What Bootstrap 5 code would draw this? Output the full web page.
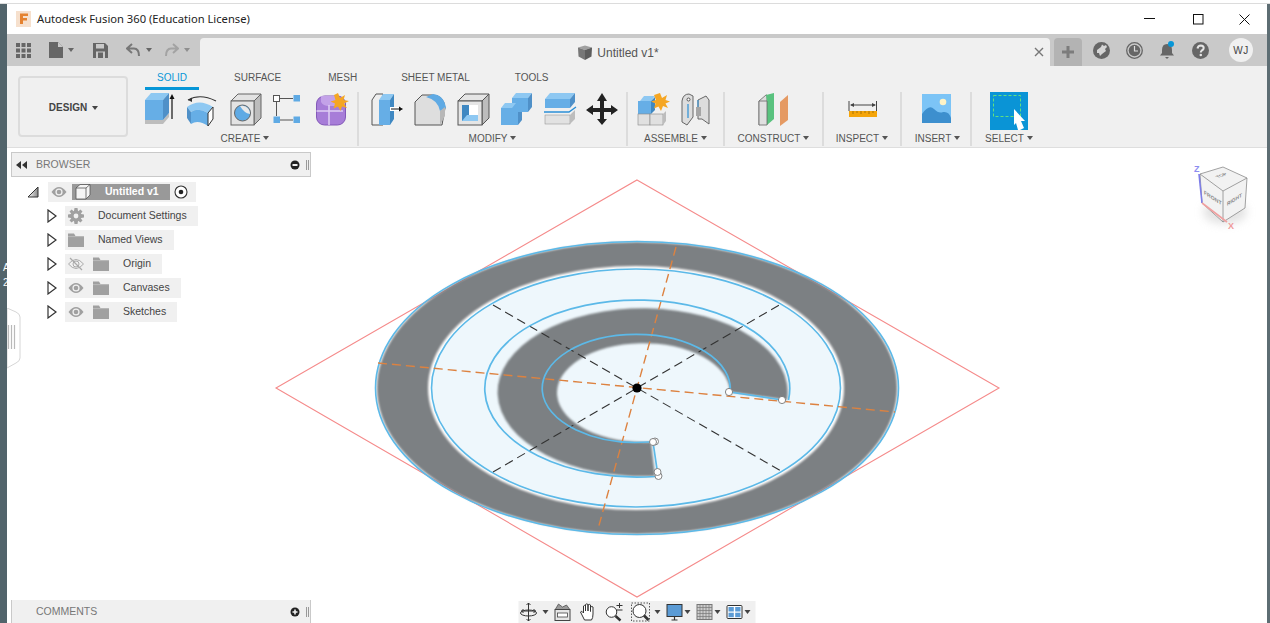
<!DOCTYPE html>
<html lang="en"><head><meta charset="utf-8"><title>Autodesk Fusion 360</title>
<link rel="stylesheet" href="https://cdn.jsdelivr.net/npm/bootstrap@5.3.0/dist/css/bootstrap.min.css">
<style>
html,body{height:623px;overflow:hidden;background:#fff}
body{font-family:"Liberation Sans",Arial,sans-serif;font-size:10px;color:#555}
svg{display:block;flex:none}
.appw{height:620px;margin-top:3px;border-top:1px solid #dcdcdc}
.sidel{width:7px;background:#52646b;color:#fff;font-size:10px;line-height:15px;padding-top:256px;padding-left:3px;overflow:hidden;flex:none}
.sider{width:3px;background:#5d6d73;flex:none}
.mainc{min-width:0}
.titleb{height:30px;background:#fff;color:#222;font-family:"Noto Sans",sans-serif;font-size:11.2px}
.tbic{padding-left:9px}
.titletx{margin-left:6px}
.winbtn{width:45px;height:30px}
.shift5{margin-right:10px}.shift1{margin-right:2px}
.tabb{height:32px;background:#c9c9c9}
.tabtools{width:193px;padding-left:9px;height:32px}
.m18{margin-left:18px}.m19{margin-left:19px}.m5{margin-left:5px}.m6{margin-left:6px}.m13{margin-left:13px}
.tabdoc{width:850px;height:28px;background:#f0f0f0;border-radius:4px 4px 0 0;color:#555;font-size:12px;position:relative;padding-right:14px}
.doctx{padding-top:1px}
.tabclose{position:absolute;right:6px;top:9px}
.plusb{width:28px;height:28px;background:#b3b3b3;border-radius:4px 4px 0 0;margin-left:4px}
.crt{display:inline-block;width:0;height:0;border-left:3.5px solid transparent;border-right:3.5px solid transparent;border-top:4px solid currentColor;flex:none}
.caretg{color:#666}.caretl{color:#8f8f8f}
.rtools{gap:16px;padding-left:11px}
.avat{width:24px;height:24px;border-radius:50%;background:#f0f0f0;font-size:10px;color:#444;letter-spacing:.5px}
.ribbon{height:82px;background:#f0f0f0;border-bottom:1px solid #dedede;padding-left:11px}
.designb{width:110px;height:61px;margin-top:10px;border:2px solid #dcdcdc;border-radius:4px;background:#f0f0f0;font-weight:700;color:#444;font-size:10px;gap:5px;padding:2px 0 0 1px}
.ribr{margin-left:5px}
.ribtabs{height:24px;padding-left:12px;gap:23px}
.rtab{padding:4px 12px 0;height:24px;color:#555;border-bottom:2px solid transparent;font-size:10px}
.rtab-on{color:#0696d7;border-bottom:3px solid #0696d7}
.pull3{margin-left:-3px}.pull2{margin-left:-2px}
.rgp{height:54px;margin-top:2px;border-right:2px solid #dcdcdc}
.rgp-create{width:226px}.rgp-modify{width:269px}.rgp-assemble{width:97px}.rgp-construct{width:99px}.rgp-inspect{width:78px}.rgp-insert{width:70px}.rgp-select{width:74px;border-right:0}
.iconr{height:36px}
.slot{width:43px;flex:none}
.inset10{padding-left:10px}.inset11{padding-left:12px}.inset9{padding-left:9px}
.inset32{padding-left:32px}.inset24{padding-left:24px}.inset19{padding-left:19px}.inset18{padding-left:18px}
.rlabel{height:18px;gap:3px;color:#555;font-size:10px;padding-top:2px}
.insertl{padding-left:3px}
.canv{background:#fff;min-height:0}
.scene{position:absolute;left:0;top:0}
.panel{position:relative;width:300px;margin-left:4px}
.phead{height:25px;margin-top:4px;background:#f0f0f0;border:1px solid #c9c9c9;color:#777;padding-left:4px;font-size:10.5px}
.plabel{margin-left:9px}
.pgrip{margin:0 0 0 auto}
.tree{margin-top:5px;color:#444;font-size:10.5px}
.trow{height:20px;margin-bottom:4px}
.twist{margin-left:36px;margin-right:8px}
.rootpad{padding-left:16px}
.tpill{height:20px;background:#f0f0f0;padding-right:11px}
.rootpill{width:148px;margin-left:9px;background:#f0f0f0;height:20px}
.rootname{width:98px;height:16px;background:#999;color:#fff;font-weight:700;margin-left:5px;font-size:10.5px}
.rootnm{margin-left:14px}
.ic16l{margin-left:3px}.fold2{margin-left:9px}
.tnm{margin-left:14px}
.grabb{position:absolute;left:0;top:160px;z-index:2}
.combar{position:relative;width:300px;height:23px;margin-left:4px;background:#f0f0f0;border-left:1px solid #c9c9c9;border-right:1px solid #c9c9c9;color:#777;padding-left:24px;font-size:10.5px}
.navb{height:22px;width:237px;background:#f0f0f0;color:#444}
.gap6{margin-left:6px}
</style></head>
<body>
<svg class="d-none" width="0" height="0">
<symbol id="eye" viewBox="0 0 16 16"><path d="M0.5 8 Q8 -2 15.5 8 Q8 18 0.5 8Z" fill="#a0a0a0"/><circle cx="8" cy="8" r="3.6" fill="#f0f0f0"/><circle cx="8" cy="8" r="2.3" fill="#a0a0a0"/></symbol>
<symbol id="eyeoff" viewBox="0 0 16 16"><path d="M0.5 8 Q8 -1 15.5 8 Q8 17 0.5 8Z" fill="none" stroke="#aaa"/><circle cx="8" cy="8" r="3" fill="none" stroke="#aaa"/><path d="M2 2 L14 14" stroke="#aaa" stroke-width="1.2"/></symbol>
<symbol id="fold" viewBox="0 0 16 16"><path d="M0 1.5 H6 L7.5 4 H16 V15 H0Z" fill="#a0a0a0"/><path d="M0 4.6 H16" stroke="#c4c4c4" stroke-width=".7"/></symbol>
<symbol id="tw" viewBox="0 0 10 14"><path d="M1 1 L9 7 L1 13Z" fill="#fff" stroke="#333" stroke-width="1.2"/></symbol>
</svg>
<div class="appw d-flex">
 <div class="sidel">A<br>2</div>
 <div class="mainc flex-grow-1 d-flex flex-column">
  <div class="titleb d-flex align-items-center">
   <div class="tbic"><svg width="15" height="16" viewBox="0 0 15 16"><rect width="15" height="16" fill="#f6e0cd"/><path d="M4 2.5 H12 V5 H7 V7 H11 V9.5 H7 V13 H4Z" fill="#e5822f"/></svg></div>
   <div class="titletx">Autodesk Fusion 360 (Education License)</div>
   <div class="ms-auto d-flex">
    <div class="winbtn d-flex align-items-center justify-content-center"><svg class="shift5" width="11" height="2"><rect y="0" width="11" height="1" fill="#111"/></svg></div>
    <div class="winbtn d-flex align-items-center justify-content-center"><svg class="shift1" width="11" height="11"><rect x=".5" y=".5" width="9.5" height="9.5" fill="none" stroke="#111"/></svg></div>
    <div class="winbtn d-flex align-items-center justify-content-center"><svg width="11" height="11"><path d="M.5 .5 L10.5 10.5 M10.5 .5 L.5 10.5" stroke="#111"/></svg></div>
   </div>
  </div>
  <div class="tabb d-flex align-items-end">
   <div class="tabtools d-flex align-items-center">
    <svg width="15" height="15" viewBox="0 0 15 15" fill="#666"><rect width="4" height="4"/><rect x="5.5" width="4" height="4"/><rect x="11" width="4" height="4"/><rect y="5.5" width="4" height="4"/><rect x="5.5" y="5.5" width="4" height="4"/><rect x="11" y="5.5" width="4" height="4"/><rect y="11" width="4" height="4"/><rect x="5.5" y="11" width="4" height="4"/><rect x="11" y="11" width="4" height="4"/></svg>
    <svg class="m18" width="14" height="16" viewBox="0 0 14 16"><path d="M0 0 H9 L14 5 V16 H0Z" fill="#666"/><path d="M9 0 V5 H14" fill="#c9c9c9"/></svg>
    <span class="crt caretg m5"></span>
    <svg class="m19" width="15" height="15" viewBox="0 0 15 15"><path d="M0 0 H12 L15 3 V15 H0Z" fill="#666"/><rect x="3" y="1" width="8" height="4.5" fill="#c9c9c9"/><rect x="3" y="8.5" width="9" height="6.5" fill="#c9c9c9"/><rect x="5" y="9.5" width="5" height="5.5" fill="#666"/></svg>
    <svg class="m18" width="14" height="14" viewBox="0 0 14 14"><path d="M6 1 L1 5.5 L6 10 M1.5 5.5 H8 Q13 5.5 13 13" fill="none" stroke="#777" stroke-width="2"/></svg>
    <span class="crt caretg m6"></span>
    <svg class="m13" width="14" height="14" viewBox="0 0 14 14"><path d="M8 1 L13 5.5 L8 10 M12.5 5.5 H6 Q1 5.5 1 13" fill="none" stroke="#a3a3a3" stroke-width="2"/></svg>
    <span class="crt caretl m5"></span>
   </div>
   <div class="tabdoc d-flex align-items-center justify-content-center gap-1">
    <svg width="16" height="15" viewBox="0 0 16 15"><path d="M1 2.5 L8 0.5 L15 2.5 L8 5Z" fill="#a0a0a0"/><path d="M1 2.5 L8 5 V15 L1.5 11.5Z" fill="#777"/><path d="M15 2.5 L8 5 V15 L14.5 11.5Z" fill="#5d5d5d"/></svg>
    <span class="doctx">Untitled v1*</span>
    <svg class="tabclose" width="10" height="10"><path d="M1 1 L9 9 M9 1 L1 9" stroke="#777" stroke-width="1.4"/></svg>
   </div>
   <div class="plusb d-flex align-items-center justify-content-center"><svg width="14" height="14"><path d="M7 1 V13 M1 7 H13" stroke="#7c7c7c" stroke-width="3"/></svg></div>
   <div class="flex-grow-1 d-flex align-items-center h-100 rtools">
    <svg width="17" height="17" viewBox="0 0 17 17"><circle cx="8.5" cy="8.5" r="8.5" fill="#666"/><path d="M4 8 L8 5 L9 2.5 L11 4 L13 3 L14 5 L12 7 L13 9 L9 12 L7 14 L6 11 L4 11Z" fill="#d5d5d5"/></svg>
    <svg width="17" height="17" viewBox="0 0 17 17"><circle cx="8.5" cy="8.5" r="7.8" fill="#c9c9c9" stroke="#666" stroke-width="1.3"/><circle cx="8.5" cy="8.5" r="5.8" fill="#666"/><path d="M8.5 4 V9 H12" fill="none" stroke="#ddd" stroke-width="1.2"/></svg>
    <svg width="17" height="19" viewBox="0 0 17 19"><path d="M8 3 Q3 3 3 9 V12 L1 14.5 H15 L13 12 V9 Q13 3 8 3Z" fill="#666"/><path d="M6 16 H10 L8 18Z" fill="#666"/><circle cx="12" cy="3" r="3" fill="#0696d7"/></svg>
    <svg width="17" height="17" viewBox="0 0 17 17"><circle cx="8.5" cy="8.5" r="8.5" fill="#666"/><path d="M5.5 6.5 Q6 3.5 8.8 3.5 Q11.7 3.6 11.7 6 Q11.7 7.5 9.8 8.5 Q8.8 9.2 8.8 10.5" fill="none" stroke="#e5e5e5" stroke-width="2"/><circle cx="8.8" cy="13" r="1.3" fill="#e5e5e5"/></svg>
    <div class="avat ms-1 d-flex align-items-center justify-content-center">WJ</div>
   </div>
  </div>
  <div class="ribbon d-flex">
   <div class="designb d-flex align-items-center justify-content-center"><span>DESIGN</span><span class="crt"></span></div>
   <div class="ribr">
    <div class="ribtabs d-flex"><div class="rtab rtab-on">SOLID</div><div class="rtab">SURFACE</div><div class="rtab">MESH</div><div class="rtab pull3">SHEET METAL</div><div class="rtab pull2">TOOLS</div></div>
    <div class="d-flex">
     <div class="rgp rgp-create">
      <div class="iconr d-flex inset10">
       <div class="slot"><svg width="36" height="36" viewBox="0 0 36 36"><path d="M2 28 H20 L26 21 V25 L20 32 H2Z" fill="#bdbdbd"/><path d="M2 8 L8 1 H26 L20 8Z" fill="#8ec8f2"/><rect x="2" y="8" width="18" height="20" fill="#66aee6"/><path d="M20 8 L26 1 V21 L20 28Z" fill="#4f90c8"/><path d="M29 27 V5" stroke="#111" stroke-width="1.2"/><path d="M26.5 7 L29 2 L31.5 7Z" fill="#111"/></svg></div>
       <div class="slot"><svg width="36" height="36" viewBox="0 0 36 36"><path d="M2 8 Q14 1 30 9" fill="none" stroke="#333" stroke-width="1.1"/><path d="M2 8 L6 5.5 L6 10Z" fill="#333"/><path d="M1 15 Q13 6 27 15 L22 21 Q12 15 5 20Z" fill="#8ec8f2"/><path d="M1 15 L5 20 V32 L1 26Z" fill="#4f90c8"/><path d="M5 20 Q12 15 22 21 V34 Q12 27 5 32Z" fill="#66aee6"/><path d="M22 21 L27 15 V27 L22 34Z" fill="#fff" stroke="#333"/></svg></div>
       <div class="slot"><svg width="36" height="36" viewBox="0 0 36 36"><path d="M2 9 L9 2 H32 L25 9Z" fill="#e3e3e3" stroke="#666"/><path d="M25 9 L32 2 V26 L25 33Z" fill="#bcbcbc" stroke="#666"/><rect x="2" y="9" width="23" height="24" fill="#e3e3e3" stroke="#666"/><circle cx="13.5" cy="21" r="8" fill="#5faae4" stroke="#666"/><path d="M11 14 A8 8 0 0 1 21 22 Q15 21 11 14Z" fill="#e9e9e9"/></svg></div>
       <div class="slot"><svg width="36" height="36" viewBox="0 0 36 36" fill="#5faae4"><rect x="1.5" y="3.5" width="6" height="6" fill="#fff" stroke="#555"/><rect x="21.5" y="3" width="6.5" height="6.5"/><rect x="1.5" y="24.5" width="6.5" height="6.5"/><rect x="21.5" y="24.5" width="6.5" height="6.5"/><path d="M8 6.5 H21 M4.5 10 V24 M8 28 H21" stroke="#555" stroke-width="1"/></svg></div>
       <div class="slot"><svg width="36" height="36" viewBox="0 0 36 36"><rect x="1.5" y="4" width="29" height="29" rx="8" fill="#a77dd8" stroke="#8359b8"/><path d="M6 4 H22 L30 10 V14 H14 Q8 14 6 10Z" fill="#c3a2e8"/><path d="M1.5 19 H28 M14 13 V33" stroke="#e0cff3" stroke-width="1.5"/><path d="M23 1 L25 6 L30 3 L28.5 8 L34 9 L29 11.5 L32 16 L27 14.5 L25.5 19 L23 14.5 L18.5 16.5 L20 11.5 L15.5 9.5 L20.5 8 L19 3Z" fill="#f5a623"/></svg></div>
      </div>
      <div class="rlabel d-flex align-items-center justify-content-center"><span>CREATE</span><span class="crt"></span></div>
     </div>
     <div class="rgp rgp-modify">
      <div class="iconr d-flex inset11">
       <div class="slot"><svg width="36" height="36" viewBox="0 0 36 36"><path d="M1 8 L5 2 H12 V33 H1Z" fill="#eee" stroke="#555"/><path d="M8 8 L12 2 H23 L19 8Z" fill="#8ec8f2"/><rect x="8" y="8" width="11" height="25" fill="#66aee6"/><path d="M19 8 L23 2 V27 L19 33Z" fill="#3f88c2"/><rect x="19" y="15" width="12" height="4" fill="#fff"/><path d="M20 17 H29" stroke="#111"/><path d="M28 14.5 L32 17 L28 19.5Z" fill="#111"/></svg></div>
       <div class="slot"><svg width="36" height="36" viewBox="0 0 36 36"><path d="M1 10 L8 3 H18 Q30 3 31 16 L28 33 H1Z" fill="#dedede" stroke="#555"/><path d="M12 5 L19 2 Q30 3 32 16 L26 19 Q24 8 12 5Z" fill="#5faae4"/><path d="M26 19 L31 15 V24 L26 33Z" fill="#b8b8b8"/></svg></div>
       <div class="slot"><svg width="36" height="36" viewBox="0 0 36 36"><path d="M1 9 L8 2 H32 L25 9Z" fill="#e5e5e5" stroke="#555"/><path d="M25 9 L32 2 V26 L25 33Z" fill="#bdbdbd" stroke="#555"/><rect x="1" y="9" width="24" height="24" fill="#e5e5e5" stroke="#555"/><rect x="5" y="13" width="16" height="16" fill="#fff"/><path d="M5 13 H12 V23 H21 V29 H5Z" fill="#3f88c2"/><path d="M5 29 L10 23 H21 V29Z" fill="#8ec8f2"/></svg></div>
       <div class="slot"><svg width="36" height="36" viewBox="0 0 36 36"><path d="M12 6 L16 1 H32 L28 6Z" fill="#8ec8f2"/><rect x="12" y="6" width="16" height="14" fill="#66aee6"/><path d="M28 6 L32 1 V15 L28 20Z" fill="#4f90c8"/><path d="M1 16 L5 11 H16 L12 16Z" fill="#8ec8f2"/><rect x="1" y="16" width="17" height="17" fill="#66aee6"/><path d="M18 20 H22 V28 L18 33Z" fill="#4f90c8"/></svg></div>
       <div class="slot"><svg width="36" height="36" viewBox="0 0 36 36"><path d="M2 7 L7 1 H32 L27 7Z" fill="#8ec8f2"/><rect x="2" y="7" width="25" height="9" fill="#66aee6"/><path d="M27 7 L32 1 V10 L27 16Z" fill="#4f90c8"/><path d="M1 20 L26 20 L33 15" fill="none" stroke="#2b8fd6" stroke-width="1.4"/><rect x="2" y="23" width="25" height="9" fill="#e2e2e2" stroke="#888" stroke-width=".5"/><path d="M27 23 L32 18 V27 L27 32Z" fill="#bdbdbd"/></svg></div>
       <div class="slot"><svg width="36" height="36" viewBox="0 0 36 36" fill="#222"><path d="M16 1 L21 9 H18 V16 H25 V13 L32 18 L25 23 V20 H18 V27 H21 L16 33 L11 27 H14 V20 H7 V23 L0 18 L7 13 V16 H14 V9 H11Z"/></svg></div>
      </div>
      <div class="rlabel d-flex align-items-center justify-content-center"><span>MODIFY</span><span class="crt"></span></div>
     </div>
     <div class="rgp rgp-assemble">
      <div class="iconr d-flex inset9">
       <div class="slot"><svg width="36" height="36" viewBox="0 0 36 36"><path d="M3 9 L7 4 H18 L14 9Z" fill="#8ec8f2"/><rect x="1" y="9" width="13" height="13" fill="#66aee6"/><path d="M14 9 L18 5 V18 L14 22Z" fill="#3f88c2"/><rect x="1" y="22" width="12" height="11" fill="#e0e0e0" stroke="#888" stroke-width=".6"/><rect x="13" y="22" width="13" height="11" fill="#e0e0e0" stroke="#888" stroke-width=".6"/><path d="M26 22 L29 19 V29 L26 33Z" fill="#bdbdbd"/><path d="M23 1 L25 6 L30 3 L28.5 8 L33 9.5 L28.5 11.5 L31 16 L26 14 L24 19 L21.5 14.5 L17 16.5 L18.5 11.5 L14 9.5 L19 8 L17 3Z" fill="#f5a623"/></svg></div>
       <div class="slot"><svg width="36" height="36" viewBox="0 0 36 36"><path d="M2 9 Q3 2 9 2 L13 4 V25 L7 33 L2 30Z" fill="#ddd" stroke="#666"/><path d="M18 8 L26 4 L29 8 V32 L22 27 H18Z" fill="#ddd" stroke="#666"/><rect x="7" y="6" width="3" height="3" rx="1.5" fill="#fff" stroke="#555"/><path d="M8 12 V26" stroke="#2b8fd6" stroke-width="1.2"/><path d="M18 8 V15" stroke="#2b8fd6"/><rect x="16" y="15" width="5" height="9" fill="#a5a5a5"/></svg></div>
      </div>
      <div class="rlabel d-flex align-items-center justify-content-center"><span>ASSEMBLE</span><span class="crt"></span></div>
     </div>
     <div class="rgp rgp-construct">
      <div class="iconr d-flex inset32">
       <svg width="36" height="36" viewBox="0 0 36 36"><path d="M2 9 L9 3 H10 V28 L2 33Z" fill="#ddd" stroke="#666" stroke-width=".8"/><path d="M9 3 L17 1 V27 L10 33 V9Z" fill="#59c27e"/><path d="M2 9 H10 V33 H2Z" fill="#e0e0e0" stroke="#666" stroke-width=".8"/><path d="M23 10 L31 3 V28 L23 34Z" fill="#e59a63"/></svg>
      </div>
      <div class="rlabel d-flex align-items-center justify-content-center"><span>CONSTRUCT</span><span class="crt"></span></div>
     </div>
     <div class="rgp rgp-inspect">
      <div class="iconr d-flex inset24">
       <svg width="32" height="36" viewBox="0 0 32 36"><path d="M1 9 V19 M28.5 9 V19" stroke="#444"/><path d="M3 13 H27" stroke="#444"/><path d="M6 11 L2 13 L6 15Z M24 11 L28 13 L24 15Z" fill="#444"/><rect x="1" y="19" width="28" height="6" fill="#f5a50a"/><path d="M5 19 V22 M9 19 V21 M13 19 V22 M17 19 V21 M21 19 V22 M25 19 V21" stroke="#8a5f00" stroke-width=".7"/></svg>
      </div>
      <div class="rlabel d-flex align-items-center justify-content-center"><span>INSPECT</span><span class="crt"></span></div>
     </div>
     <div class="rgp rgp-insert">
      <div class="iconr d-flex inset19">
       <svg width="32" height="36" viewBox="0 0 32 36"><rect x="1" y="2" width="29" height="29" fill="#7cc4f6"/><circle cx="22" cy="10" r="3.3" fill="#fdf3c7"/><path d="M1 31 V22 Q8 12 13 17 Q18 22 22 20 Q28 19 30 26 V31Z" fill="#3d8fce"/></svg>
      </div>
      <div class="rlabel insertl d-flex align-items-center justify-content-center"><span>INSERT</span><span class="crt"></span></div>
     </div>
     <div class="rgp rgp-select">
      <div class="iconr d-flex inset18">
       <svg width="38" height="38" viewBox="0 0 38 38"><rect width="38" height="38" fill="#0a94d6"/><rect x="3.5" y="3.5" width="27" height="21" fill="none" stroke="#62e07e" stroke-dasharray="3 2"/><path d="M24 17 L35 29 H31 L34 36 L30 38 H28 L26 31 L24 33Z" fill="#fff"/></svg>
      </div>
      <div class="rlabel d-flex align-items-center justify-content-center"><span>SELECT</span><span class="crt"></span></div>
     </div>
    </div>
   </div>
  </div>
  <div class="canv flex-grow-1 position-relative d-flex flex-column">
   <svg class="scene" width="1260" height="475" viewBox="7 148 1260 475">
    <defs><filter id="soft" x="-5%" y="-5%" width="110%" height="110%"><feGaussianBlur stdDeviation="1"/></filter><filter id="soft3" x="-40%" y="-40%" width="180%" height="180%"><feGaussianBlur stdDeviation="4"/></filter></defs>
    <path d="M637 180 L999 388 L637 597 L276 388Z" fill="none" stroke="#f58a8a" stroke-width="1.1"/>
    <ellipse cx="637" cy="388" rx="260" ry="146" fill="#7c8083" filter="url(#soft)"/>
    <ellipse cx="636" cy="388" rx="208" ry="122" fill="#fff" filter="url(#soft)"/>
    <ellipse cx="636" cy="388" rx="204.5" ry="119" fill="#eef7fc"/>
    <ellipse cx="637" cy="388" rx="261.5" ry="146.5" fill="none" stroke="#5cb9e8" stroke-width="1.6"/>
    <ellipse cx="636" cy="388" rx="204.5" ry="119" fill="none" stroke="#5cb9e8" stroke-width="1.6"/>
    <path d="M787 400 A145 84 0 1 0 655 476 L651 442 A86.5 49.5 0 1 1 730 392Z" fill="#7c8083" filter="url(#soft)"/>
    <path d="M378 363 L895 412 M676 247 L598 529" stroke="#dd8240" stroke-width="1.4" stroke-dasharray="9 5" fill="none"/>
    <path d="M493 305 L781 471 M493 472 L781 304" stroke="#333" stroke-width="1.1" stroke-dasharray="9 5" fill="none"/>
    <path d="M788.5 400 A152.5 88.5 0 1 0 655 476.5 L658 476 L653 442 L648 442 A94 54 0 1 1 730 392 L782 400" fill="none" stroke="#5cb9e8" stroke-width="1.7"/>
    <g fill="#fff" stroke="#777" stroke-width=".9"><circle cx="655" cy="441.5" r="3.5"/><circle cx="653" cy="442" r="3.5"/><circle cx="658.5" cy="476" r="3.5"/><circle cx="657.5" cy="472" r="3.5"/><circle cx="729" cy="392" r="3.6"/><circle cx="782" cy="400" r="3.6"/></g>
    <circle cx="637" cy="388" r="4.6" fill="#000"/>
    <ellipse cx="1225" cy="212" rx="22" ry="12" fill="#ccc" opacity=".55" filter="url(#soft3)"/>
    <path d="M1223 167 L1247 178 L1245 208 L1223 222 L1202 203 L1200 174Z" fill="#f2f2f2" stroke="#8a8a8a" stroke-width=".8"/>
    <path d="M1200 174 L1223 191 L1247 178 M1223 191 V222" fill="none" stroke="#8a8a8a" stroke-width=".8"/>
    <g font-family="Liberation Sans" font-size="6" fill="#888" font-weight="700"><text transform="matrix(.85 .55 0 .9 1204 194)">FRONT</text><text transform="matrix(.8 -.5 0 .9 1227 206)">RIGHT</text><text transform="matrix(.8 -.3 .7 .4 1218 178)">TOP</text></g>
    <path d="M1199 174 L1202 203" stroke="#7d7de8" stroke-width="1.6"/><path d="M1202 203 L1227 222" stroke="#f0a0a0" stroke-width="1.6"/>
    <text x="1194" y="172" font-family="Liberation Sans" font-size="9" font-weight="700" fill="#8d8df0">Z</text>
    <text x="1228" y="229" font-family="Liberation Sans" font-size="9" font-weight="700" fill="#f09a9a">X</text>
   </svg>
   <div class="grabb"><svg width="14" height="62" viewBox="0 0 14 62"><path d="M0 0 L9 4 Q13 6 13 9 V50 Q13 53 9 55 L0 60Z" fill="#fff" stroke="#d6d6d6"/><path d="M1.5 17 V41 M4.5 17 V41 M7.5 17 V41" stroke="#b9b9b9" stroke-width="1.2"/></svg></div>
   <div class="panel">
    <div class="phead d-flex align-items-center">
     <svg width="11" height="8" viewBox="0 0 11 8" fill="#333"><path d="M5 0 V8 L0 4Z M11 0 V8 L6 4Z"/></svg>
     <span class="plabel">BROWSER</span>
     <svg class="pgrip" width="20" height="12" viewBox="0 0 20 12"><circle cx="5" cy="6" r="4.5" fill="#222"/><rect x="2.5" y="5" width="5" height="2" fill="#f0f0f0"/><path d="M16.5 1 V11 M18.5 1 V11" stroke="#999"/></svg>
    </div>
    <div class="tree">
     <div class="trow d-flex align-items-center rootpad">
      <svg width="12" height="12" viewBox="0 0 12 12"><defs><linearGradient id="trg" x1="0" x2="1"><stop offset="0" stop-color="#fff"/><stop offset="1" stop-color="#888"/></linearGradient></defs><path d="M1 11 L11 1 V11Z" fill="url(#trg)" stroke="#333"/></svg>
      <div class="rootpill d-flex align-items-center">
       <svg class="ic16l" width="16" height="16"><use href="#eye"/></svg>
       <div class="rootname d-flex align-items-center">
        <svg class="ic16l" width="16" height="16" viewBox="0 0 16 16"><path d="M1 4 L5 .5 H15 V11 L11 15 H1Z" fill="#f4f4f4" stroke="#555" stroke-width=".8"/><path d="M1 4 H11 V15 M11 4 L15 .5" fill="none" stroke="#555" stroke-width=".8"/></svg>
        <span class="rootnm">Untitled v1</span>
       </div>
       <svg class="ms-1" width="14" height="14" viewBox="0 0 14 14"><circle cx="7" cy="7" r="6" fill="#fff" stroke="#333" stroke-width="1.1"/><circle cx="7" cy="7" r="2.3" fill="#222"/></svg>
      </div>
     </div>
     <div class="trow d-flex align-items-center"><svg class="twist" width="10" height="14"><use href="#tw"/></svg><div class="tpill d-flex align-items-center">
       <svg class="ic16l" width="16" height="16" viewBox="0 0 16 16"><g fill="#a0a0a0"><circle cx="8" cy="8" r="5.5"/><path d="M6.5 0 H9.5 L10 3 H6Z M6.5 16 H9.5 L10 13 H6Z M0 6.5 V9.5 L3 10 V6Z M16 6.5 V9.5 L13 10 V6Z M1.5 3.6 L3.6 1.5 L6 3.5 L3.5 6Z M14.5 3.6 L12.4 1.5 L10 3.5 L12.5 6Z M1.5 12.4 L3.6 14.5 L6 12.5 L3.5 10Z M14.5 12.4 L12.4 14.5 L10 12.5 L12.5 10Z"/></g><circle cx="8" cy="8" r="2.4" fill="#f0f0f0"/></svg>
       <span class="tnm">Document Settings</span></div></div>
     <div class="trow d-flex align-items-center"><svg class="twist" width="10" height="14"><use href="#tw"/></svg><div class="tpill d-flex align-items-center">
       <svg class="ic16l" width="16" height="16"><use href="#fold"/></svg><span class="tnm">Named Views</span></div></div>
     <div class="trow d-flex align-items-center"><svg class="twist" width="10" height="14"><use href="#tw"/></svg><div class="tpill d-flex align-items-center">
       <svg class="ic16l" width="16" height="16"><use href="#eyeoff"/></svg><svg class="fold2" width="16" height="16"><use href="#fold"/></svg><span class="tnm">Origin</span></div></div>
     <div class="trow d-flex align-items-center"><svg class="twist" width="10" height="14"><use href="#tw"/></svg><div class="tpill d-flex align-items-center">
       <svg class="ic16l" width="16" height="16"><use href="#eye"/></svg><svg class="fold2" width="16" height="16"><use href="#fold"/></svg><span class="tnm">Canvases</span></div></div>
     <div class="trow d-flex align-items-center"><svg class="twist" width="10" height="14"><use href="#tw"/></svg><div class="tpill d-flex align-items-center">
       <svg class="ic16l" width="16" height="16"><use href="#eye"/></svg><svg class="fold2" width="16" height="16"><use href="#fold"/></svg><span class="tnm">Sketches</span></div></div>
    </div>
   </div>
   <div class="combar mt-auto d-flex align-items-center">
    <span>COMMENTS</span>
    <svg class="pgrip" width="20" height="12" viewBox="0 0 20 12"><circle cx="5" cy="6" r="4.5" fill="#222"/><path d="M2.5 6 H7.5 M5 3.5 V8.5" stroke="#f0f0f0" stroke-width="1.6"/><path d="M16.5 1 V11 M18.5 1 V11" stroke="#999"/></svg>
   </div>
   <div class="navb position-absolute bottom-0 start-50 translate-middle-x d-flex align-items-center">
    <svg width="20" height="20" viewBox="0 0 20 20" fill="none" stroke="#333"><path d="M10 1 V19 M8 3 L10 1 L12 3 M8 17 L10 19 L12 17"/><path d="M3 9 H17 M5 7 L3 9 L5 11 M15 7 L17 9 L15 11" /><ellipse cx="10" cy="11" rx="8" ry="3"/></svg>
    <span class="crt ms-1"></span>
    <svg class="ms-1" width="20" height="20" viewBox="0 0 20 20"><rect x="2.5" y="7.5" width="15" height="11" fill="#e6e6e6" stroke="#444"/><rect x="5" y="11" width="10" height="4" fill="#fff" stroke="#444" stroke-width=".8"/><path d="M3 7 L6 2 L10 5 L14 3 L17 7" fill="#999" stroke="#444" stroke-width=".7"/></svg>
    <svg class="gap6" width="20" height="20" viewBox="0 0 20 20"><path d="M6 18 Q3 12 2 10 Q3 8 5 11 L5 4 Q6 2.8 7 4 V9 V2.5 Q8 1.3 9.5 2.5 V9 V3 Q11 1.8 12 3 V9.5 V5 Q13.5 4 14.5 5 V12 Q14.5 16 13 18Z" fill="#fff" stroke="#333"/></svg>
    <svg class="gap6" width="20" height="20" viewBox="0 0 20 20"><circle cx="7" cy="10" r="5.3" fill="#fff" stroke="#333"/><path d="M11 14 L16 18.5" stroke="#333" stroke-width="2.4"/><path d="M12 3.5 H18 M15 1 V6 M12 8 H18" stroke="#333"/></svg>
    <svg class="gap6" width="20" height="20" viewBox="0 0 20 20"><rect x="1" y="1" width="18" height="18" fill="none" stroke="#555" stroke-dasharray="1.5 1.5"/><circle cx="9" cy="9" r="6.5" fill="#fff" stroke="#333"/><path d="M13.5 13.5 L18 18" stroke="#333" stroke-width="2.6"/></svg>
    <span class="crt ms-1"></span>
    <svg class="ms-1" width="20" height="20" viewBox="0 0 20 20"><rect x="2.5" y="2.5" width="15" height="12" fill="#5b9bd5" stroke="#333"/><path d="M7 18 H13 M10 15 V18" stroke="#333" stroke-width="1.2"/></svg>
    <span class="crt"></span>
    <svg class="ms-1" width="20" height="20" viewBox="0 0 20 20"><rect x="2.5" y="2.5" width="15" height="15" fill="#ccc" stroke="#777"/><path d="M5.5 2.5 V17.5 M8.5 2.5 V17.5 M11.5 2.5 V17.5 M14.5 2.5 V17.5 M2.5 5.5 H17.5 M2.5 8.5 H17.5 M2.5 11.5 H17.5 M2.5 14.5 H17.5" stroke="#777" stroke-width=".7"/></svg>
    <span class="crt"></span>
    <svg class="ms-1" width="20" height="20" viewBox="0 0 20 20"><rect x="2.5" y="3.5" width="15" height="13" rx="1" fill="#fff" stroke="#333"/><rect x="4" y="5" width="5.3" height="4.5" fill="#5b9bd5"/><rect x="10.7" y="5" width="5.3" height="4.5" fill="#5b9bd5"/><rect x="4" y="10.7" width="5.3" height="4.5" fill="#5b9bd5"/><rect x="10.7" y="10.7" width="5.3" height="4.5" fill="#5b9bd5"/></svg>
    <span class="crt"></span>
   </div>
  </div>
 </div>
 <div class="sider"></div>
</div>
<script src="https://cdn.jsdelivr.net/npm/bootstrap@5.3.0/dist/js/bootstrap.bundle.min.js"></script>
</body></html>
